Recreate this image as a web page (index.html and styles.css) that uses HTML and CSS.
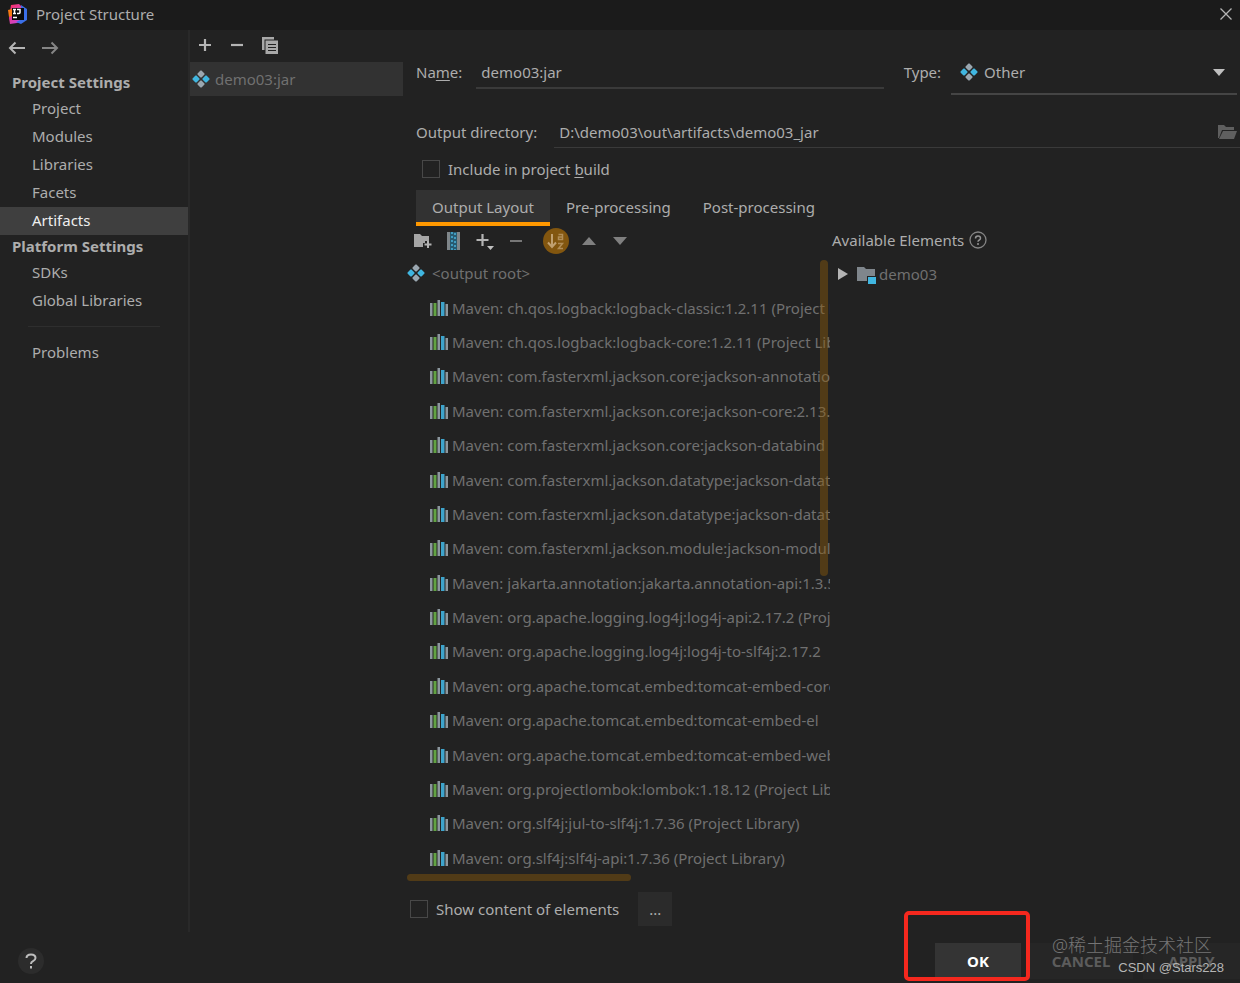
FILE: index.html
```html
<!DOCTYPE html>
<html lang="en">
<head>
  <meta charset="UTF-8" />
  <title>Project Structure</title>
  <link rel="stylesheet" href="styles.css">
</head>
<body>
  <!-- shared icons -->
  <svg class="sprite" width="0" height="0" aria-hidden="true">
    <symbol id="artifact" viewBox="0 0 18 18">
      <path fill="#9aa7b0" d="M8.500 0.500h1l3 3v1l-3 3h-1l-3-3v-1zM8.500 10.500h1l3 3v1l-3 3h-1l-3-3v-1z"/>
      <path fill="#40b6e0" d="M3.500 5.500h1l3 3v1l-3 3h-1l-3-3v-1zM13.500 5.500h1l3 3v1l-3 3h-1l-3-3v-1z"/>
    </symbol>
    <symbol id="library" viewBox="0 0 18 16">
      <path fill="#8c979e" d="M0 3h2.500v13H0zM7.500 0h2.500v16H7.500zM15.500 4H18v12h-2.500z"/>
      <path fill="#62a344" d="M3.500 3h3v13h-3z"/>
      <path fill="#3ea4cc" d="M11 2h3.500v14H11z"/>
    </symbol>
  </svg>

  <header class="titlebar">
    <svg class="logo" width="20" height="20" viewBox="0 0 20 20">
      <defs>
        <linearGradient id="pink" x1="0" y1="0" x2="1" y2="1">
          <stop offset="0" stop-color="#fe315d"/>
          <stop offset="1" stop-color="#b74af7"/>
        </linearGradient>
      </defs>
      <path fill="url(#pink)" d="M3 1 11 0l5 5-2 12-5 2-7 1L1 14z"/>
      <path fill="#f97a12" d="M0 6 4 5v7l-3 1z"/>
      <path fill="#3b6fe8" d="m13 1 6 4v11l-6 4-5-2 6-3z"/>
      <path fill="#0a0a0a" d="M4 4h12v12H4z"/>
      <path fill="none" stroke="#fff" stroke-width="1.500" d="M5 5.500h3M6.500 5.500v4M5 9.500h3M9 5.500h3v3q0 1-1 1H9M5 13.500h4"/>
    </svg>
    <h1>Project Structure</h1>
    <button class="icon-btn close" aria-label="Close">
      <svg width="12" height="12" viewBox="0 0 12 12"><path d="m0.500 0.500 11 11M11.500 0.500l-11 11" stroke="#b4b4b4" stroke-width="1.300"/></svg>
    </button>
  </header>

  <main class="content">
    <nav class="sidebar">
      <div class="history">
        <button class="icon-btn" aria-label="Back">
          <svg width="18" height="14" viewBox="0 0 18 14"><path d="M17 7H2M7.500 1.500 2 7l5.500 5.500" fill="none" stroke="#b4b4b4" stroke-width="2"/></svg>
        </button>
        <button class="icon-btn" aria-label="Forward">
          <svg width="18" height="14" viewBox="0 0 18 14"><path d="M1 7h15M10.500 1.500 16 7l-5.500 5.500" fill="none" stroke="#858585" stroke-width="2"/></svg>
        </button>
      </div>
      <h2>Project Settings</h2>
      <a href="#project">Project</a>
      <a href="#modules">Modules</a>
      <a href="#libraries">Libraries</a>
      <a href="#facets">Facets</a>
      <a href="#artifacts" class="active">Artifacts</a>
      <h2>Platform Settings</h2>
      <a href="#sdks">SDKs</a>
      <a href="#global">Global Libraries</a>
      <hr>
      <a href="#problems">Problems</a>
    </nav>

    <section class="artifacts">
      <div class="toolbar">
        <button class="icon-btn" aria-label="Add">
          <svg width="14" height="14" viewBox="0 0 14 14"><path d="M7 1v12M1 7h12" stroke="#b4b4b4" stroke-width="2.200"/></svg>
        </button>
        <button class="icon-btn" aria-label="Remove">
          <svg width="14" height="14" viewBox="0 0 14 14"><path d="M1 7h12" stroke="#b4b4b4" stroke-width="2.200"/></svg>
        </button>
        <button class="icon-btn" aria-label="Copy">
          <svg width="16" height="17" viewBox="0 0 16 17">
            <path fill="#a9a9a9" d="M0 0h12v2.500H2.500V13H0z"/>
            <path fill="#a9a9a9" d="M3.500 3.500H16V17H3.500z"/>
            <path d="M6 7.500h8M6 10.500h8M6 13.500h8" stroke="#222"/>
          </svg>
        </button>
      </div>
      <ul>
        <li class="selected"><svg width="18" height="18"><use href="#artifact"/></svg><span>demo03:jar</span></li>
      </ul>
    </section>

    <section class="editor">
      <div class="name-row">
        <label for="name">Na<u>m</u>e:</label>
        <input class="field" type="text" id="name" value="demo03:jar">
        <label class="type-label" for="type">Type:</label>
        <div class="type-box">
          <svg width="18" height="18"><use href="#artifact"/></svg>
          <select id="type"><option>Other</option></select>
          <svg width="12" height="7" viewBox="0 0 12 7"><path fill="#c0c0c0" d="M0 0h12L6 7z"/></svg>
        </div>
      </div>

      <div class="dir-row">
        <label for="dir">Output directory:</label>
        <div class="dir-box">
          <input type="text" id="dir" value="D:\demo03\out\artifacts\demo03_jar">
          <button class="icon-btn" aria-label="Browse">
            <svg width="19" height="14" viewBox="0 0 19 14">
              <path fill="#5f5f5f" d="M0 0h6l2 2h8v3H4L1 13H0z"/>
              <path fill="#5f5f5f" d="M5 6h14l-3 8H1z"/>
            </svg>
          </button>
        </div>
      </div>

      <div class="check-row">
        <input type="checkbox" id="include">
        <label for="include">Include in project <u>b</u>uild</label>
      </div>

      <div class="tabs" role="tablist">
        <button role="tab" class="current" aria-selected="true">Output Layout</button>
        <button role="tab">Pre-processing</button>
        <button role="tab">Post-processing</button>
      </div>

      <div class="split">
        <div class="layout-pane">
          <div class="tree-tools">
            <button class="icon-btn" aria-label="Create directory">
              <svg width="18" height="16" viewBox="0 0 18 16">
                <path fill="#a6a6a6" d="M0 1h6l2 2h7v5h-4v2H9v4H0z"/>
                <path d="M14 8v7M10.500 11.500h7" stroke="#b4b4b4" stroke-width="2"/>
              </svg>
            </button>
            <button class="icon-btn" aria-label="Create archive">
              <svg width="13" height="18" viewBox="0 0 13 18">
                <path fill="#7f868a" d="M0 0h13v18H0z"/>
                <path fill="#285a70" d="M3 0h7v18H3z"/>
                <path d="M5 0v18M8 1v17" stroke="#419cc0" stroke-width="2" stroke-dasharray="2 2"/>
              </svg>
            </button>
            <button class="icon-btn" aria-label="Add copy of">
              <svg width="18" height="18" viewBox="0 0 18 18">
                <path d="M6.500 2v12M0.500 8h12" stroke="#b4b4b4" stroke-width="2.200"/>
                <path fill="#c0c0c0" d="M11 14h7l-3.500 4z"/>
              </svg>
            </button>
            <button class="icon-btn" aria-label="Remove element">
              <svg width="12" height="14" viewBox="0 0 12 14"><path d="M0 7h12" stroke="#777" stroke-width="2"/></svg>
            </button>
            <button class="icon-btn sort" aria-label="Sort alphabetically">
              <svg width="18" height="18" viewBox="0 0 18 18">
                <path d="M5 2v12M1 10.500 5 15l4-4.500" fill="none" stroke="#c0a070" stroke-width="2"/>
                <path d="M11.500 2.500h4v5h-4v-2.500h4M11 11.500h4.500L11.500 16.500H16" fill="none" stroke="#b08d57" stroke-width="1.500"/>
              </svg>
            </button>
            <button class="icon-btn" aria-label="Move up">
              <svg width="14" height="8" viewBox="0 0 14 8"><path fill="#808080" d="M0 8h14L7 0z"/></svg>
            </button>
            <button class="icon-btn" aria-label="Move down">
              <svg width="14" height="8" viewBox="0 0 14 8"><path fill="#808080" d="M0 0h14L7 8z"/></svg>
            </button>
          </div>
          <div class="tree-wrap">
            <ul class="tree">
              <li class="root"><svg width="18" height="18"><use href="#artifact"/></svg>&lt;output root&gt;</li>
              <li><svg width="18" height="16"><use href="#library"/></svg>Maven: ch.qos.logback:logback-classic:1.2.11 (Project Library)</li>
              <li><svg width="18" height="16"><use href="#library"/></svg>Maven: ch.qos.logback:logback-core:1.2.11 (Project Library)</li>
              <li><svg width="18" height="16"><use href="#library"/></svg>Maven: com.fasterxml.jackson.core:jackson-annotations</li>
              <li><svg width="18" height="16"><use href="#library"/></svg>Maven: com.fasterxml.jackson.core:jackson-core:2.13.3</li>
              <li><svg width="18" height="16"><use href="#library"/></svg>Maven: com.fasterxml.jackson.core:jackson-databind</li>
              <li><svg width="18" height="16"><use href="#library"/></svg>Maven: com.fasterxml.jackson.datatype:jackson-datatype-jdk8</li>
              <li><svg width="18" height="16"><use href="#library"/></svg>Maven: com.fasterxml.jackson.datatype:jackson-datatype-jsr310</li>
              <li><svg width="18" height="16"><use href="#library"/></svg>Maven: com.fasterxml.jackson.module:jackson-module</li>
              <li><svg width="18" height="16"><use href="#library"/></svg>Maven: jakarta.annotation:jakarta.annotation-api:1.3.5</li>
              <li><svg width="18" height="16"><use href="#library"/></svg>Maven: org.apache.logging.log4j:log4j-api:2.17.2 (Project Library)</li>
              <li><svg width="18" height="16"><use href="#library"/></svg>Maven: org.apache.logging.log4j:log4j-to-slf4j:2.17.2</li>
              <li><svg width="18" height="16"><use href="#library"/></svg>Maven: org.apache.tomcat.embed:tomcat-embed-core</li>
              <li><svg width="18" height="16"><use href="#library"/></svg>Maven: org.apache.tomcat.embed:tomcat-embed-el</li>
              <li><svg width="18" height="16"><use href="#library"/></svg>Maven: org.apache.tomcat.embed:tomcat-embed-websocket</li>
              <li><svg width="18" height="16"><use href="#library"/></svg>Maven: org.projectlombok:lombok:1.18.12 (Project Library)</li>
              <li><svg width="18" height="16"><use href="#library"/></svg>Maven: org.slf4j:jul-to-slf4j:1.7.36 (Project Library)</li>
              <li><svg width="18" height="16"><use href="#library"/></svg>Maven: org.slf4j:slf4j-api:1.7.36 (Project Library)</li>
            </ul>
            <div class="scroll-y"></div>
            <div class="scroll-x"></div>
          </div>
          <div class="show-row">
            <input type="checkbox" id="show">
            <label for="show">Show content of elements</label>
            <button class="more">...</button>
          </div>
        </div>

        <div class="available">
          <h3>Available Elements
            <svg width="18" height="18" viewBox="0 0 18 18">
              <circle cx="9" cy="9" r="8" fill="none" stroke="#858585" stroke-width="1.300"/>
              <path d="M6.500 7.500q0-2.500 2.500-2.500t2.500 2.200q0 1.300-1.500 2-1 .5-1 1.600" fill="none" stroke="#959595" stroke-width="1.500"/>
              <circle cx="9" cy="13" r="1" fill="#959595"/>
            </svg>
          </h3>
          <div class="module">
            <svg width="10" height="12" viewBox="0 0 10 12"><path fill="#b4b4b4" d="M0 0v12l10-6z"/></svg>
            <svg width="19" height="18" viewBox="0 0 19 18">
              <path fill="#7f868c" d="M0 1h7l2 2h9v7h-8v5H0z"/>
              <path fill="#40b6e0" d="M11 11h8v7h-8z"/>
            </svg>
            <span>demo03</span>
          </div>
        </div>
      </div>
    </section>
  </main>

  <footer class="footer">
    <button class="help" aria-label="Help">
      <svg width="12" height="16" viewBox="0 0 12 16">
        <path d="M1.500 5Q1.500 1.500 6 1.500T10.500 5q0 1.800-2.500 3.200-2 1-2 2.800" fill="none" stroke="#bdbdbd" stroke-width="2"/>
        <path fill="#bdbdbd" d="M5 13h2v2.500H5z"/>
      </svg>
    </button>
    <button class="action ok">OK</button>
    <button class="action cancel">CANCEL</button>
    <button class="action apply">APPLY</button>
    <div class="highlight"></div>
    <span class="mark community">@稀土掘金技术社区</span>
    <span class="mark author">CSDN @Stars228</span>
  </footer>
</body>
</html>
```
FILE: styles.css
```css
* {
  box-sizing: border-box;
}
body {
  margin: 0;
  min-height: 100vh;
  display: flex;
  flex-direction: column;
  background: #222;
  color: #adadad;
  font-family: "Noto Sans", "Noto Sans CJK SC", sans-serif;
  font-size: 15px;
  line-height: 20px;
}
h1, h2, h3, ul {
  margin: 0;
  padding: 0;
  font-size: 15px;
  list-style: none;
}
svg {
  display: block;
  flex: none;
}
button, input, select {
  font: inherit;
  color: inherit;
  background: none;
  border: 0;
  margin: 0;
  padding: 0;
  outline: 0;
}
u {
  text-underline-offset: 2px;
}
.sprite {
  position: absolute;
}
.icon-btn {
  display: flex;
  align-items: center;
  justify-content: center;
}

/* title bar */
.titlebar {
  height: 30px;
  display: flex;
  align-items: center;
  gap: 8px;
  padding: 0 8px;
  padding-bottom: 3px;
  background: #1b1b1b;
}
.titlebar h1 {
  flex: 1;
  font-weight: normal;
}

.content {
  flex: 1;
  display: flex;
}

/* left navigation */
.sidebar {
  width: 190px;
  flex: none;
  border-right: 2px solid #292929;
}
.history {
  display: flex;
  gap: 15px;
  height: 41px;
  padding: 0 8px;
  padding-bottom: 5px;
}
.sidebar h2 {
  padding: 0 0 2px 12px;
  line-height: 22px;
}
.sidebar a {
  display: block;
  padding: 0 0 2px 32px;
  line-height: 26px;
  color: inherit;
  text-decoration: none;
}
.sidebar a.active {
  background: #3f3f3f;
  color: #eee;
}
.sidebar hr {
  margin: 11px 28px 12px;
  border: 0;
  border-top: 1px solid #2e2e2e;
}

/* artifact list */
.artifacts {
  width: 213px;
  flex: none;
}
.toolbar {
  display: flex;
  align-items: center;
  gap: 18px;
  height: 32px;
  padding: 0 0 2px 8px;
}
.artifacts li {
  display: flex;
  align-items: center;
  gap: 5px;
  height: 34px;
  padding-left: 2px;
  background: #323232;
  color: #707070;
}

/* artifact editor */
.editor {
  flex: 1;
  min-width: 0;
  display: flex;
  flex-direction: column;
}
.name-row {
  display: flex;
  align-items: flex-end;
  padding: 21px 3px 0 13px;
}
.field {
  flex: 3;
  min-width: 0;
  height: 33px;
  margin: 0 0 6px 14px;
  padding: 0 5px;
  border-bottom: 2px solid #3a3a3a;
}
.name-row label {
  padding-bottom: 13px;
}
.type-label {
  margin-left: 20px;
}
.type-box {
  flex: 2;
  display: flex;
  align-items: center;
  gap: 6px;
  height: 44px;
  margin-left: 10px;
  padding: 0 12px 0 9px;
  border-bottom: 2px solid #454545;
}
.type-box select {
  flex: 1;
  appearance: none;
}
.dir-row {
  display: flex;
  align-items: center;
  margin-top: 21px;
  padding-left: 13px;
}
.dir-box {
  flex: 1;
  display: flex;
  align-items: center;
  height: 32px;
  margin-left: 17px;
  padding: 0 3px 0 5px;
  border-bottom: 1px solid #3a3a3a;
}
.dir-box input {
  flex: 1;
}
.check-row {
  display: flex;
  align-items: center;
  gap: 8px;
  height: 42px;
  padding-left: 19px;
}
input[type="checkbox"] {
  appearance: none;
  width: 18px;
  height: 18px;
  border: 1px solid #484848;
}
.tabs {
  display: flex;
  padding-left: 13px;
}
.tabs button {
  height: 36px;
  padding: 2px 16px 0;
  border-bottom: 4px solid transparent;
}
.tabs .current {
  background: #323232;
  border-color: #ff9800;
}

/* output layout / available elements */
.split {
  flex: 1;
  display: grid;
  grid-template-columns: 25fr 24fr;
}
.layout-pane {
  min-width: 0;
  display: flex;
  flex-direction: column;
  padding-left: 4px;
}
.tree-tools {
  display: flex;
  align-items: center;
  height: 30px;
}
.tree-tools .icon-btn {
  width: 31px;
}
.tree-tools .sort {
  width: 26px;
  height: 26px;
  margin: 0 4px 0 12px;
  border-radius: 50%;
  background: #82560f;
}
.tree-wrap {
  position: relative;
  flex: 1;
  display: flex;
}
.tree {
  flex: 1;
  min-width: 0;
  display: flex;
  flex-direction: column;
  overflow: hidden;
  color: #707070;
}
.tree li {
  flex: 1;
  display: flex;
  align-items: center;
  gap: 4px;
  padding-left: 23px;
  white-space: nowrap;
}
.tree .root {
  gap: 7px;
  padding-left: 0;
}
.scroll-y, .scroll-x {
  position: absolute;
  border-radius: 4px;
  background: rgba(140, 90, 10, 0.45);
}
.scroll-y {
  top: 4px;
  right: 2px;
  width: 8px;
  height: 51%;
}
.scroll-x {
  left: 0;
  bottom: -6px;
  width: 53%;
  height: 7px;
}
.show-row {
  display: flex;
  align-items: center;
  gap: 8px;
  margin: 17px 0 6px;
  padding-left: 3px;
}
.more {
  width: 34px;
  height: 34px;
  margin-left: 11px;
  background: #2b2b2b;
}
.available {
  padding-left: 2px;
}
.available h3 {
  display: flex;
  align-items: center;
  gap: 5px;
  height: 28px;
  font-weight: normal;
}
.module {
  display: flex;
  align-items: center;
  height: 40px;
  padding-left: 6px;
  color: #707070;
}
.module svg + svg {
  margin: 2px 3px 0 9px;
}

/* dialog buttons */
.footer {
  position: relative;
  display: flex;
  align-items: center;
  height: 51px;
  padding: 7px 0 0 18px;
}
.help {
  display: flex;
  align-items: center;
  justify-content: center;
  width: 26px;
  height: 26px;
  margin-right: auto;
  border-radius: 50%;
  background: #2c2c2c;
}
.action {
  height: 36px;
  font-weight: bold;
  background: #262626;
  color: #5c5c5c;
}
.ok {
  width: 86px;
  margin-right: 8px;
  background: #343434;
  color: #fff;
}
.cancel {
  width: 104px;
  margin-right: 10px;
}
.apply {
  width: 97px;
}
.highlight {
  position: absolute;
  right: 210px;
  bottom: 2px;
  width: 126px;
  height: 70px;
  border: 4px solid #f5281e;
  border-radius: 5px;
}
.mark {
  position: absolute;
  white-space: nowrap;
}
.community {
  right: 28px;
  bottom: 28px;
  font-size: 18px;
  font-weight: 300;
  color: #757575;
}
.author {
  right: 16px;
  bottom: 5px;
  font-family: "Liberation Sans", Arial, sans-serif;
  font-size: 13px;
  color: #b5b5b5;
}
```
